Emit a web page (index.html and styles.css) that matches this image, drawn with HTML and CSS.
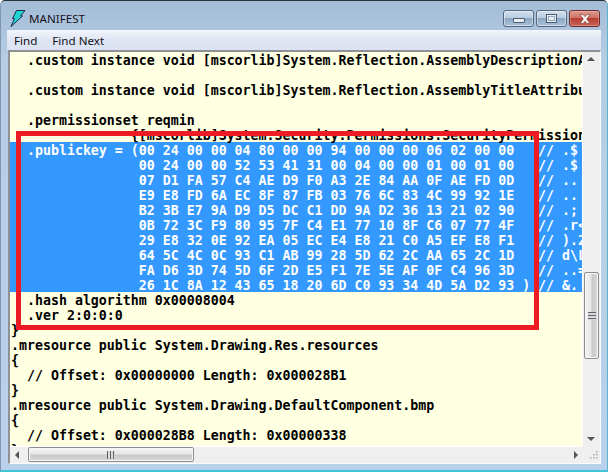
FILE: index.html
```html
<!DOCTYPE html>
<html lang="en">
<head>
<meta charset="utf-8">
<title>MANIFEST</title>
<link rel="stylesheet" href="styles.css">
</head>
<body>
<div class="window">
  <header class="titlebar">
    <svg class="app-icon" width="16" height="17" viewBox="0 0 16 17"><path d="M6.500 .5H15L10.500 6H12.500L1 16.500L4.500 8.500H2.500Z" fill="#1fd6d0" stroke="#1c2a50" stroke-width="1"/></svg>
    <span class="title">MANIFEST</span>
    <div class="controls">
      <div class="ctl ctl-min"><span class="min-glyph"></span></div>
      <div class="ctl ctl-max"><span class="max-glyph"></span></div>
      <div class="ctl ctl-close"><svg width="16" height="12" viewBox="0 0 16 12"><path d="M3 1.500H6L8 3.700L10 1.500H13L9.700 6L13 10.500H10L8 8.300L6 10.500H3L6.300 6Z" fill="#f4f2f2" stroke="#7c3a34" stroke-width=".6"/></svg></div>
    </div>
  </header>
  <nav class="menu"><span class="menu-item">Find</span><span class="menu-item">Find Next</span></nav>
  <main class="client">
    <div class="code"><div class="ln">  .custom instance void [mscorlib]System.Reflection.AssemblyDescriptionAttribute::.ctor(string) = ( 01 00 00 00 )</div>
<div class="ln">&nbsp;</div>
<div class="ln">  .custom instance void [mscorlib]System.Reflection.AssemblyTitleAttribute::.ctor(string) = ( 01 00 00 00 )</div>
<div class="ln">&nbsp;</div>
<div class="ln">  .permissionset reqmin</div>
<div class="ln">               {[mscorlib]System.Security.Permissions.SecurityPermission</div>
<div class="ln sel">  .publickey = (00 24 00 00 04 80 00 00 94 00 00 00 06 02 00 00   // .$</div>
<div class="ln sel">                00 24 00 00 52 53 41 31 00 04 00 00 01 00 01 00   // .$</div>
<div class="ln sel">                07 D1 FA 57 C4 AE D9 F0 A3 2E 84 AA 0F AE FD 0D   // ..</div>
<div class="ln sel">                E9 E8 FD 6A EC 8F 87 FB 03 76 6C 83 4C 99 92 1E   // ..</div>
<div class="ln sel">                B2 3B E7 9A D9 D5 DC C1 DD 9A D2 36 13 21 02 90   // .;</div>
<div class="ln sel">                0B 72 3C F9 80 95 7F C4 E1 77 10 8F C6 07 77 4F   // .r&lt;</div>
<div class="ln sel">                29 E8 32 0E 92 EA 05 EC E4 E8 21 C0 A5 EF E8 F1   // ).2</div>
<div class="ln sel">                64 5C 4C 0C 93 C1 AB 99 28 5D 62 2C AA 65 2C 1D   // d\L</div>
<div class="ln sel">                FA D6 3D 74 5D 6F 2D E5 F1 7E 5E AF 0F C4 96 3D   // ..=</div>
<div class="ln sel">                26 1C 8A 12 43 65 18 20 6D C0 93 34 4D 5A D2 93 ) // &amp;.</div>
<div class="ln">  .hash algorithm 0x00008004</div>
<div class="ln">  .ver 2:0:0:0</div>
<div class="ln">}</div>
<div class="ln">.mresource public System.Drawing.Res.resources</div>
<div class="ln">{</div>
<div class="ln">  // Offset: 0x00000000 Length: 0x000028B1</div>
<div class="ln">}</div>
<div class="ln">.mresource public System.Drawing.DefaultComponent.bmp</div>
<div class="ln">{</div>
<div class="ln">  // Offset: 0x000028B8 Length: 0x00000338</div>
<div class="ln">}</div></div>
    <div class="vscroll">
      <span class="arrow arrow-up"></span>
      <div class="vthumb"><span class="vgrip"></span></div>
      <span class="arrow arrow-down"></span>
    </div>
    <div class="hscroll">
      <span class="arrow arrow-left"></span>
      <div class="hthumb"><span class="hgrip"></span></div>
      <span class="arrow arrow-right"></span>
    </div>
    <div class="sizer"><svg width="12" height="12" viewBox="0 0 12 12"><path d="M9 1h1.500v1.500H9zM6 4h1.500v1.500H6zM9 4h1.500v1.500H9zM3 7h1.500v1.500H3zM6 7h1.500v1.500H6zM9 7h1.500v1.500H9z" fill="#a9adb2"/></svg></div>
  </main>
  <div class="annotation"></div>
</div>
</body>
</html>
```

FILE: styles.css
```css
html, body {
  margin: 0;
  padding: 0;
}

body {
  width: 608px;
  height: 472px;
  overflow: hidden;
  background: #ffffff;
}

.window {
  position: relative;
  box-sizing: border-box;
  width: 608px;
  height: 472px;
  display: flex;
  flex-direction: column;
  overflow: hidden;
  border-top: 1px solid #26333f;
  border-left: 1px solid #7f98ad;
  border-right: 1px solid #5fb2cc;
  border-bottom: 2px solid #3fc4d8;
  border-radius: 5px 5px 0 0;
  background: linear-gradient(#a4bdd6 0, #b5cde5 60px, #b9d1ea 100%);
}

.titlebar {
  height: 29px;
  flex: none;
  display: flex;
  align-items: center;
  padding-left: 9px;
}

.app-icon {
  flex: none;
  margin-top: 5px;
  margin-right: 3px;
}

.title {
  font: 11.6px "Noto Sans", sans-serif;
  color: #1a1020;
  margin-top: 5px;
}

.controls {
  margin-left: auto;
  display: flex;
  gap: 2px;
  align-self: flex-start;
  margin-top: 9px;
  margin-right: 7px;
}

.ctl {
  box-sizing: border-box;
  height: 17px;
  width: 31px;
  border: 1px solid #55677c;
  border-radius: 3px;
  display: flex;
  align-items: center;
  justify-content: center;
  background: linear-gradient(#d0dfee 0, #b9cde1 45%, #8ba7c3 50%, #a9c2da 100%);
  box-shadow: inset 0 0 0 1px rgba(255, 255, 255, .45);
}

.ctl-close {
  background: linear-gradient(#dc9a90 0, #cf7266 45%, #b53c2e 50%, #c9665a 100%);
  border-color: #6d2c2c;
  box-shadow: inset 0 0 0 1px rgba(255, 220, 210, .3);
}

.min-glyph {
  width: 10px;
  height: 3px;
  margin-top: 4px;
  background: #e9eef3;
  border: 1px solid #4c5b6d;
  border-radius: 1px;
}

.max-glyph {
  box-sizing: border-box;
  width: 11px;
  height: 9px;
  background: #e9eef3;
  border: 1px solid #4c5b6d;
  box-shadow: inset 0 0 0 1px #e9eef3, inset 0 0 0 2px #93a9bf;
}

.menu {
  flex: none;
  height: 20px;
  margin: 0 6px;
  box-sizing: border-box;
  display: flex;
  align-items: center;
  padding: 0 7px;
  gap: 15px;
  background: linear-gradient(#f2f5fb 0, #dfe5f3 50%, #dbe2f1 100%);
  font: 11.6px "Noto Sans", sans-serif;
  color: #101020;
}

.client {
  flex: 1;
  min-height: 0;
  margin: 0 6px 6px 7px;
  display: grid;
  grid-template-columns: 1fr 18px;
  grid-template-rows: 1fr 17px;
  background: #f0f0f0;
  border-top: 2px solid #8e9296;
  border-left: 2px solid #8e9296;
  border-right: 1px solid #fbfbfb;
  border-bottom: 1px solid #fbfbfb;
}

.code {
  overflow: hidden;
  min-width: 0;
  min-height: 0;
  background: #ffffe1;
  font: bold 13.28px/17px "DejaVu Sans Mono", monospace;
  color: #000;
}

.ln {
  height: 15px;
  padding-left: 1px;
  white-space: pre;
}

.sel {
  background: #3399ff;
  color: #fff;
}

.vscroll {
  position: relative;
  box-sizing: border-box;
  display: flex;
  flex-direction: column;
  align-items: center;
  background: #efefef;
  border-left: 1px solid #fff;
}

.vthumb {
  position: absolute;
  top: 220px;
  left: 1px;
  box-sizing: border-box;
  width: 15px;
  height: 87px;
  border: 1px solid #8b8f94;
  border-radius: 2px;
  display: flex;
  align-items: center;
  justify-content: center;
  background: linear-gradient(90deg, #f5f5f5 0, #e6e6e6 45%, #c9c9c9 55%, #d9d9d9 100%);
  box-shadow: inset 0 0 0 1px #f6f6f6;
}

.vgrip {
  width: 8px;
  height: 8px;
  background: repeating-linear-gradient(#5f6469 0 1px, #d9d9d9 1px 3px);
}

.arrow {
  width: 0;
  height: 0;
  position: absolute;
}

.arrow-up {
  top: 5px;
  left: 4px;
  border: 4px solid transparent;
  border-top: 0;
  border-bottom: 4px solid #555;
}

.arrow-down {
  bottom: 5px;
  left: 4px;
  border: 4px solid transparent;
  border-bottom: 0;
  border-top: 4px solid #555;
}

.hscroll {
  position: relative;
  background: #efefef;
  border-top: 1px solid #fff;
}

.hthumb {
  position: absolute;
  top: 0;
  left: 18px;
  box-sizing: border-box;
  width: 166px;
  height: 15px;
  border: 1px solid #8b8f94;
  border-radius: 2px;
  display: flex;
  align-items: center;
  justify-content: center;
  background: linear-gradient(#f5f5f5 0, #e6e6e6 45%, #c9c9c9 55%, #d9d9d9 100%);
  box-shadow: inset 0 0 0 1px #f6f6f6;
}

.hgrip {
  width: 8px;
  height: 8px;
  background: repeating-linear-gradient(90deg, #5f6469 0 1px, #d9d9d9 1px 3px);
}

.arrow-left {
  left: 5px;
  top: 4px;
  border: 4px solid transparent;
  border-left: 0;
  border-right: 4px solid #555;
}

.arrow-right {
  right: 4px;
  top: 4px;
  border: 4px solid transparent;
  border-right: 0;
  border-left: 4px solid #555;
}

.sizer {
  background: #efefef;
  display: flex;
  align-items: flex-end;
  justify-content: flex-end;
  padding: 0 1px 1px 0;
}

.annotation {
  position: absolute;
  left: 15px;
  top: 130px;
  width: 513px;
  height: 189px;
  border: 5px solid #ed1c24;
}
```
